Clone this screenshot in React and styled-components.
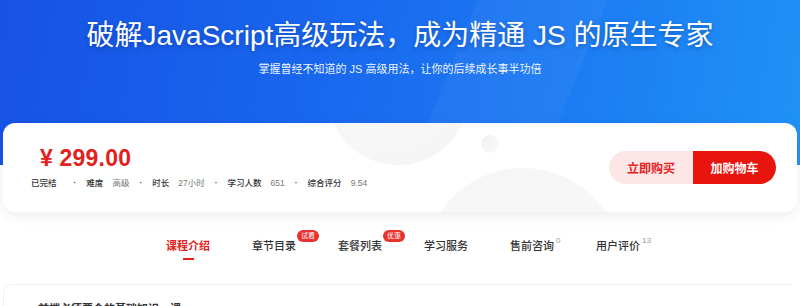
import React from "react";
import styled, { createGlobalStyle } from "styled-components";

const GlobalStyle = createGlobalStyle`
  html, body { margin: 0; padding: 0; background: #ffffff; }
  body {
    font-family: "Liberation Sans", "Noto Sans CJK SC", sans-serif;
    width: 800px;
    height: 306px;
    overflow: hidden;
  }
  * { box-sizing: border-box; }
`;

const Page = styled.div`
  width: 800px;
  height: 306px;
  overflow: hidden;
  background: #ffffff;
`;

const Banner = styled.header`
  position: relative;
  height: 165px;
  padding-top: 17px;
  text-align: center;
  color: #fff;
  overflow: hidden;
  background:
    linear-gradient(112deg, rgba(255,255,255,0) 0%, rgba(255,255,255,0) 55%, rgba(255,255,255,0.04) 55.2%, rgba(255,255,255,0.04) 70%, rgba(255,255,255,0) 70.2%),
    linear-gradient(100deg, #1752e4 0%, #1967ee 40%, #1c7ff3 75%, #2092f7 100%);
`;

const Title = styled.h1`
  margin: 0;
  font-size: 28px;
  line-height: 38px;
  font-weight: 400;
  letter-spacing: 0;
  text-shadow: 0 2px 4px rgba(0, 30, 100, 0.35);
`;

const Subtitle = styled.p`
  margin: 6px 0 0;
  font-size: 11px;
  line-height: 16px;
  color: rgba(255,255,255,0.95);
`;

const Card = styled.section`
  position: relative;
  margin: -42px 3px 0;
  height: 89px;
  background: #ffffff;
  border-radius: 12px;
  box-shadow: 0 4px 14px rgba(0, 0, 0, 0.07);
  overflow: hidden;
  display: flex;
  align-items: center;
  justify-content: space-between;
  padding: 0 21px 0 28px;
`;

const Deco = styled.span`
  position: absolute;
  border-radius: 50%;
  pointer-events: none;
  left: ${(p) => p.$x}px;
  top: ${(p) => p.$y}px;
  width: ${(p) => p.$d}px;
  height: ${(p) => p.$d}px;
  background: ${(p) => p.$bg};
`;

const Info = styled.div`
  position: relative;
  display: flex;
  flex-direction: column;
  gap: 5px;
`;

const Price = styled.div`
  margin-left: 9px;
  color: #e3201c;
  font-size: 23px;
  line-height: 26px;
  font-weight: 700;
  letter-spacing: 0.2px;
`;

const Meta = styled.div`
  display: flex;
  align-items: center;
  font-size: 8.5px;
  line-height: 14px;
`;

const MetaLabel = styled.span`
  color: #333;
  font-weight: 500;
  margin-right: ${(p) => (p.$gap === undefined ? 9 : p.$gap)}px;
`;

const MetaValue = styled.span`
  color: #777;
`;

const Dot = styled.span`
  color: #555;
  margin: 0 ${(p) => p.$r || 10}px 0 ${(p) => p.$l || 10}px;
  font-weight: 700;
`;

const Buttons = styled.div`
  position: relative;
  display: flex;
`;

const BuyButton = styled.button`
  border: none;
  outline: none;
  height: 33px;
  width: ${(p) => p.$w}px;
  font-family: inherit;
  font-size: 12px;
  font-weight: 700;
  cursor: pointer;
  background: ${(p) => (p.$primary ? "#e8150f" : "#fde6e6")};
  color: ${(p) => (p.$primary ? "#ffffff" : "#e3201c")};
  border-radius: ${(p) => (p.$primary ? "0 17px 17px 0" : "17px 0 0 17px")};
`;

const Tabs = styled.nav`
  display: flex;
  justify-content: center;
  gap: 42px;
  margin-top: 19px;
  padding-left: 6px;
  height: 34px;
`;

const Tab = styled.div`
  position: relative;
  font-size: 11px;
  line-height: 30px;
  height: 34px;
  color: ${(p) => (p.$active ? "#e3201c" : "#333")};
  font-weight: ${(p) => (p.$active ? 700 : 500)};
  white-space: nowrap;
  &::after {
    content: "";
    display: ${(p) => (p.$active ? "block" : "none")};
    position: absolute;
    left: 50%;
    bottom: 5px;
    width: 11px;
    height: 2px;
    margin-left: -5px;
    background: #e3201c;
  }
`;

const Badge = styled.span`
  position: absolute;
  left: 45px;
  top: -1px;
  height: 12px;
  padding: 0 4px;
  border-radius: 6px;
  background: #e8322e;
  color: #fff;
  font-size: 7px;
  line-height: 12px;
  font-weight: 400;
`;

const Count = styled.sup`
  position: absolute;
  left: 46px;
  top: -5px;
  font-size: 8px;
  color: #999;
  font-weight: 400;
`;

const Section = styled.section`
  margin: 19px 8px 0 3px;
  border-top: 1px solid #f1f1f1;
  border-left: 1px solid #f0f0f0;
  border-radius: 8px 0 0 0;
  padding: 16px 0 0 34px;
  height: 40px;
`;

const SectionTitle = styled.div`
  font-size: 11px;
  line-height: 16px;
  color: #333;
  font-weight: 700;
`;

export default function App() {
  return (
    <Page>
      <GlobalStyle />
      <Banner>
        <Title>破解JavaScript高级玩法，成为精通 JS 的原生专家</Title>
        <Subtitle>掌握曾经不知道的 JS 高级用法，让你的后续成长事半功倍</Subtitle>
      </Banner>
      <Card>
        <Deco $x={325} $y={-98} $d={140} $bg="radial-gradient(circle at 40% 40%, #fbfbfc, #f3f3f5)" />
        <Deco $x={478} $y={12} $d={18} $bg="linear-gradient(135deg, #efeff1, #fbfbfb)" />
        <Deco $x={420} $y={45} $d={200} $bg="linear-gradient(180deg, #f6f6f7, #fcfcfc)" />
        <Info>
          <Price>¥ 299.00</Price>
          <Meta>
            <MetaLabel $gap={0}>已完结</MetaLabel>
            <Dot $l={17} $r={10}>·</Dot>
            <MetaLabel>难度</MetaLabel>
            <MetaValue>高级</MetaValue>
            <Dot>·</Dot>
            <MetaLabel>时长</MetaLabel>
            <MetaValue>27小时</MetaValue>
            <Dot>·</Dot>
            <MetaLabel>学习人数</MetaLabel>
            <MetaValue>651</MetaValue>
            <Dot>·</Dot>
            <MetaLabel>综合评分</MetaLabel>
            <MetaValue>9.54</MetaValue>
          </Meta>
        </Info>
        <Buttons>
          <BuyButton $w={84}>立即购买</BuyButton>
          <BuyButton $w={83} $primary>加购物车</BuyButton>
        </Buttons>
      </Card>
      <Tabs>
        <Tab $active>课程介绍</Tab>
        <Tab>章节目录<Badge>试看</Badge></Tab>
        <Tab>套餐列表<Badge>优惠</Badge></Tab>
        <Tab>学习服务</Tab>
        <Tab>售前咨询<Count>0</Count></Tab>
        <Tab>用户评价<Count>13</Count></Tab>
      </Tabs>
      <Section>
        <SectionTitle>前端必须要会的基础知识一课</SectionTitle>
      </Section>
    </Page>
  );
}
